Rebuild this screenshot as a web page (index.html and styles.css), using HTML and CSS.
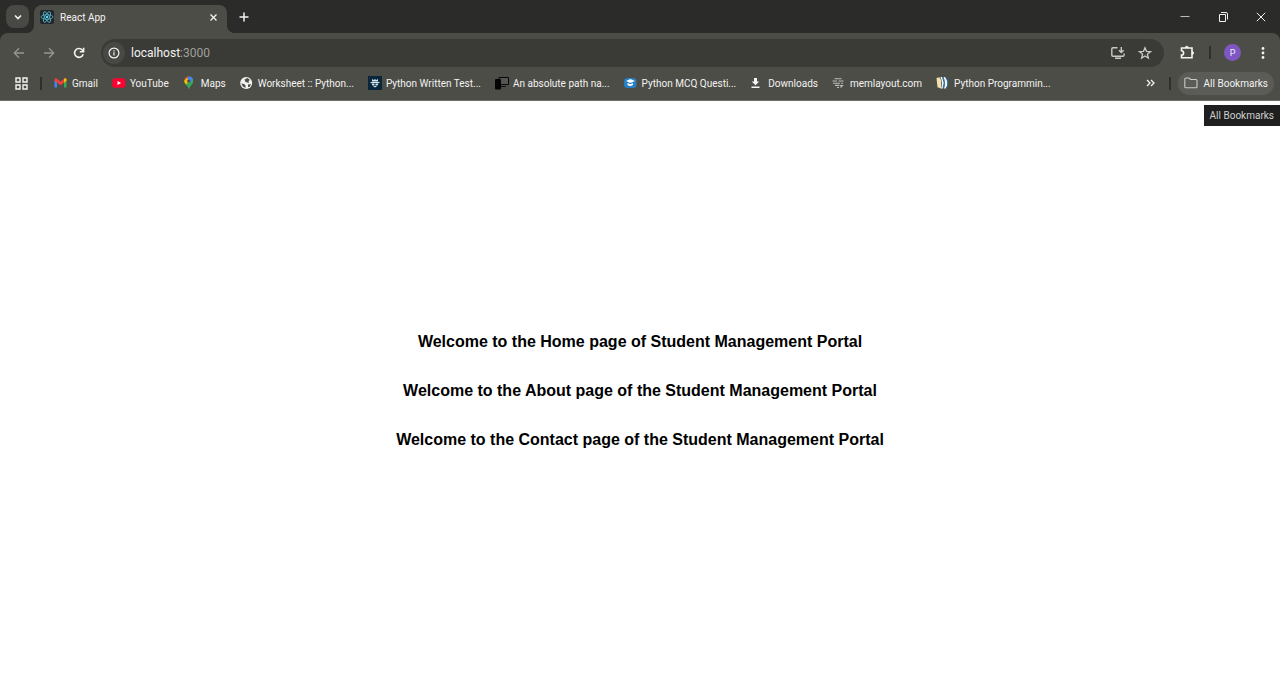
FILE: index.html
```html
<!DOCTYPE html>
<html lang="en">
<head>
<meta charset="utf-8">
<meta name="viewport" content="width=device-width, initial-scale=1">
<title>React App</title>
<link rel="stylesheet" href="styles.css">
</head>
<body>
<div class="browser">
  <header class="chrome">
    <div class="tab-strip">
      <button class="tab-search" aria-label="Search tabs"><svg width="10" height="10" viewBox="0 0 10 10" fill="none" stroke="currentColor" stroke-width="1.6"><path d="M2 3.5 5 6.5 8 3.5"/></svg></button>
      <div class="tab">
        <svg width="14" height="14" viewBox="0 0 14 14"><rect width="14" height="14" rx="2" fill="#20262b"/><g fill="none" stroke="#55b7cd" stroke-width=".8"><ellipse cx="7" cy="7" rx="6" ry="2.3"/><ellipse cx="7" cy="7" rx="6" ry="2.3" transform="rotate(60 7 7)"/><ellipse cx="7" cy="7" rx="6" ry="2.3" transform="rotate(120 7 7)"/></g><circle cx="7" cy="7" r="1.2" fill="#61dafb"/></svg>
        <span class="tab-title">React App</span>
        <button class="plain tab-close" aria-label="Close tab"><svg width="9" height="9" viewBox="0 0 9 9" stroke="currentColor" stroke-width="1.3"><path d="m1.5 1.5 6 6m0-6-6 6"/></svg></button>
      </div>
      <button class="plain new-tab" aria-label="New tab"><svg width="10" height="10" viewBox="0 0 10 10" stroke="currentColor" stroke-width="1.5"><path d="M5 .5v9M.5 5h9"/></svg></button>
      <div class="window-controls">
        <button class="plain" aria-label="Minimize"><svg width="10" height="10" viewBox="0 0 10 10" stroke="#bbb"><path d="M.5 4.500h9"/></svg></button>
        <button class="plain" aria-label="Restore"><svg width="10" height="10" viewBox="0 0 10 10" fill="none" stroke="currentColor"><path d="M1.500 2.500h6v7h-6zM3 .5h5q1.500 0 1.500 1.500v5.500"/></svg></button>
        <button class="plain" aria-label="Close"><svg width="10" height="10" viewBox="0 0 10 10" stroke="currentColor"><path d="m.8.8 8.400 8.400m0-8.400L.8 9.200"/></svg></button>
      </div>
    </div>
    <div class="panel">
      <div class="toolbar">
        <div class="nav">
          <button class="plain dim" aria-label="Back"><svg width="12" height="12" viewBox="0 0 12 12" fill="none" stroke="currentColor" stroke-width="1.300"><path d="M11 6H1.500M6 1.300 1.300 6 6 10.700"/></svg></button>
          <button class="plain dim" aria-label="Forward"><svg width="12" height="12" viewBox="0 0 12 12" fill="none" stroke="currentColor" stroke-width="1.300"><path d="M1 6h9.500M6 1.300 10.700 6 6 10.700"/></svg></button>
          <button class="plain" aria-label="Reload"><svg width="12" height="12" viewBox="0 0 12 12" fill="none" stroke="currentColor" stroke-width="1.600"><path d="M10.200 7.200A4.400 4.400 0 1 1 9.300 3l1 1"/><path d="M10.600.8v4H6.800"/></svg></button>
        </div>
        <div class="omnibox">
          <button class="plain site-info" aria-label="View site information"><svg width="12" height="12" viewBox="0 0 12 12" fill="none" stroke="currentColor" stroke-width="1.200"><circle cx="6" cy="6" r="4.900"/><path d="M6 5.300v3.200M6 3.200v1.200"/></svg></button>
          <span class="url">localhost<span class="port">:3000</span></span>
          <button class="plain soft" aria-label="Install app"><svg width="14" height="14" viewBox="0 0 14 14" fill="none" stroke="currentColor" stroke-width="1.400"><path d="M6.500 1.700H2Q.8 1.700.8 3v6Q.8 10.300 2 10.300h9.800q1.300 0 1.300-1.300V7.500M4 12.300h6M10.300 1v5.500M8 4.300l2.300 2.300 2.400-2.300"/></svg></button>
          <button class="plain soft" aria-label="Bookmark this tab"><svg width="14" height="14" viewBox="0 0 14 14" fill="none" stroke="currentColor" stroke-width="1.300"><path d="m7 1.700 1.500 3.600 4 .3-3.100 2.600 1 3.900L7 10l-3.400 2.100 1-3.900-3.100-2.600 4-.3z"/></svg></button>
        </div>
        <button class="plain extensions" aria-label="Extensions"><svg width="15" height="15" viewBox="0 0 15 15" fill="none" stroke="currentColor" stroke-width="1.600"><path d="M1.500 3H12v9.800H1.500V10a2.100 2.100 0 0 0 0-4.200z"/><path d="M5.200 2.500a1.600 1.600 0 0 1 3.100 0zM12.300 6.400a1.600 1.600 0 0 1 0 3.100z" fill="currentColor" stroke-width="1"/></svg></button>
        <span class="divider"></span>
        <button class="avatar" aria-label="Profile">P</button>
        <button class="plain menu" aria-label="Menu"><svg width="4" height="14" viewBox="0 0 4 14" fill="currentColor"><circle cx="2" cy="2.500" r="1.400"/><circle cx="2" cy="7" r="1.400"/><circle cx="2" cy="11.500" r="1.400"/></svg></button>
      </div>
      <nav class="bookmarks" aria-label="Bookmarks">
        <button class="plain apps" aria-label="Apps"><svg width="13" height="13" viewBox="0 0 13 13" fill="none" stroke="currentColor" stroke-width="1.400"><path d="M1 1h4v4H1zM8 1h4v4H8zM1 8h4v4H1zM8 8h4v4H8z"/></svg></button>
        <span class="divider"></span>
        <div class="links">
          <a href="#"><svg width="14" height="14" viewBox="0 0 14 14"><path d="M.5 4v7.500H3V6z" fill="#4285f4"/><path d="M10 6v5.500h2.500V4z" fill="#34a853"/><path d="M.5 3.500Q.8 1.800 2.500 2.600l4 3 4-3Q12.300 1.800 12.500 3.500v1.300L6.500 9.300.5 4.800z" fill="#ea4335"/><path d="m10 3 .5-.4q1.800-.8 2 .9v1.300L10 6.700z" fill="#fbbc04"/></svg>Gmail</a>
          <a href="#"><svg width="14" height="14" viewBox="0 0 14 14"><rect x=".3" y="2.300" width="13" height="9.400" rx="2.500" fill="#f03"/><path d="m5.500 5 3.600 2-3.600 2z" fill="#fff"/></svg>YouTube</a>
          <a href="#"><svg width="14" height="14" viewBox="0 0 14 14"><path d="M1.200 5a4.500 4.500 0 0 1 9 0c0 3.500-3 4-4.200 8.500C5.100 9.500 1.200 8.500 1.200 5" fill="#34a853"/><path d="M1.300 5.800 6.400.6a4.500 4.500 0 0 0-5.100 5.200" fill="#ea4335"/><path d="M1.300 4.800Q1.400 6.800 3 8.600L7 4 4 1.800z" fill="#fbbc04"/><path d="M4.400 2 5.900.5q3 0 4.200 3L6.900 7z" fill="#4285f4"/><circle cx="5.700" cy="5" r="1.600" fill="#4d4d48"/></svg>Maps</a>
          <a href="#"><svg width="14" height="14" viewBox="0 0 14 14"><circle cx="6.200" cy="7" r="6" fill="#f1f1f1"/><path d="M1.500 7.500 4 8l1.500 1.300v2.500Q2.200 11 1.500 7.500M4.500 3.500 7.500 2 10 4l-1.500 1L9 7 5.500 6zM8 8.500l3-.5-1.500 3L8 11z" fill="#4d4d48"/></svg>Worksheet :: Python...</a>
          <a href="#"><svg width="14" height="14" viewBox="0 0 14 14"><path d="M0 0h14v14H0z" fill="#09263b"/><path d="m4 3 1.500 1L7 3.300 8.500 4 10 3v2.500H4zM2.500 6h9v1h-9zM3.500 7.500h3v2h-2zM7.500 7.500h3l-1 2h-2zM5 10h4l-2 1.500z" fill="#d3e7ee"/></svg>Python Written Test...</a>
          <a href="#"><svg width="14" height="14" viewBox="0 0 14 14"><path d="M4 1.500h9.500v7H4z" fill="#555" stroke="#090909"/><path d="M6 10.500h5" stroke="#111"/><rect y="3" width="6" height="10.500" rx="1" fill="#030303"/></svg>An absolute path na...</a>
          <a href="#"><svg width="14" height="14" viewBox="0 0 14 14"><rect y="2" width="12.500" height="10" rx="3.500" fill="#2580c5"/><path d="m2 5 4.300-2L11 5 6.300 7zM3.500 7l2.800 1.200L9 7v2q-2.700 2-5.500 0z" fill="#fff"/></svg>Python MCQ Questi...</a>
          <a href="#"><svg width="14" height="14" viewBox="0 0 14 14" fill="#f5f5f5"><path d="M4 2h3v3.500h2.300L5.500 9.300 1.700 5.500H4zM1.500 10.500h8V12h-8z"/></svg>Downloads</a>
          <a href="#"><svg width="14" height="14" viewBox="0 0 14 14" fill="none" stroke="#bbb" stroke-width="1.100"><path d="M2.500 2.700h7M.5 5h4.500M6.500 5h5M1 7.200h7M9 7.200h2M3 9.400h4M7.500 9.500h3l-2 2M5 11.500h2"/></svg>memlayout.com</a>
          <a href="#"><svg width="14" height="14" viewBox="0 0 14 14"><path d="m.5 2 3-.7L5 4v8.500l-3.500-1.300z" fill="#f1dfad"/><path d="M4.500 1h2q3 6 .5 11.500H5Q7 7 4.500 1" fill="#f8f8f8"/><path d="M7.500 1h2q4 6 .5 11.500H8Q10 7 7.500 1" fill="#e8f5fb"/><path d="M6.500 1q3 6 .5 11.500M9.500 1q4.500 6 .5 11.500" fill="none" stroke="#286da0"/></svg>Python Programmin...</a>
        </div>
        <button class="plain overflow" aria-label="More bookmarks"><svg width="9" height="8" viewBox="0 0 9 8" fill="none" stroke="currentColor" stroke-width="1.300"><path d="m1 1 3 3-3 3M5 1l3 3-3 3"/></svg></button>
        <span class="divider"></span>
        <div class="all-wrap">
          <button class="all"><svg width="14" height="12" viewBox="0 0 14 12" fill="none" stroke="#c9c9c5" stroke-width="1.100"><path d="M.8 9.800V2Q.8 1 2 1h3l1.500 1.500H12q1 0 1 1v6.300q0 1-1 1H1.800q-1 0-1-1"/></svg>All Bookmarks</button>
          <span class="tooltip" role="tooltip">All Bookmarks</span>
        </div>
      </nav>
    </div>
  </header>
  <main class="page">
    <h3>Welcome to the Home page of Student Management Portal</h3>
    <h3>Welcome to the About page of the Student Management Portal</h3>
    <h3>Welcome to the Contact page of the Student Management Portal</h3>
  </main>
</div>
</body>
</html>
```
FILE: styles.css
```css
* { box-sizing: border-box; }
body { margin: 0; background: #fff; font-family: Roboto, "Open Sans", sans-serif; font-size: 10px; color: #f3f3f1; }
svg { display: block; flex: none; }
button { font: inherit; color: inherit; border: 0; padding: 0; }
.plain { background: none; display: flex; align-items: center; justify-content: center; }
.browser { min-height: 100vh; display: flex; flex-direction: column; }
.chrome { background: #2b2b29; }
.tab-strip { display: flex; height: 33px; padding-left: 6px; }
.tab-search { width: 23px; height: 23px; margin-top: 5px; border-radius: 8px; background: #484844; display: flex; align-items: center; justify-content: center; }
.tab { position: relative; display: flex; align-items: center; gap: 6px; width: 193px; margin: 5px 0 0 5px; padding: 0 8px 4px 6px; background: #4d4d48; border-radius: 8px 8px 0 0; }
.tab::before, .tab::after { content: ""; position: absolute; bottom: 0; width: 8px; height: 8px; }
.tab::before { right: 100%; background: radial-gradient(circle at 0 0, transparent 8px, #4d4d48 8px); }
.tab::after { left: 100%; background: radial-gradient(circle at 100% 0, transparent 8px, #4d4d48 8px); }
.tab-title { flex: 1; }
.tab-close { width: 12px; height: 14px; }
.new-tab { width: 34px; }
.window-controls { display: flex; margin-left: auto; }
.window-controls button { width: 38px; }
.panel { background: #4d4d48; border-radius: 8px 8px 0 0; border-bottom: 1px solid #6c6c68; }
.toolbar { display: flex; align-items: center; height: 39px; padding: 0 15px 0 8px; }
.nav { display: flex; gap: 18px; padding: 0 16px 0 5px; }
.dim { color: #969691; }
.omnibox { flex: 1; display: flex; align-items: center; gap: 13px; height: 28px; padding: 0 12px 0 2px; border-radius: 14px; background: #3a3a37; }
.site-info { width: 22px; height: 22px; border-radius: 50%; background: #484845; }
.url { flex: 1; margin-left: -7px; font-size: 12px; }
.port { color: #a0a09c; }
.soft { color: #c9c9c5; }
.extensions { margin: 0 14px 0 16px; }
.divider { flex: none; width: 2px; height: 13px; background: #2f2f2c; }
.avatar { width: 17px; height: 17px; margin: 0 20px 0 13px; border-radius: 50%; background: #7e57c2; font-size: 9px; }
.bookmarks { display: flex; align-items: center; height: 28px; padding: 0 6px 6px 15px; white-space: nowrap; }
.apps { margin-right: 12px; }
.links { flex: 1; min-width: 0; display: flex; gap: 14px; margin-left: 12px; overflow: hidden; }
.links a { display: flex; align-items: center; gap: 4px; color: inherit; text-decoration: none; }
.overflow { margin: 0 14px; }
.all-wrap { position: relative; margin-left: 7px; }
.all { display: flex; align-items: center; gap: 6px; height: 23px; padding: 0 6px; border-radius: 12px; background: #5b5b57; }
.tooltip { position: absolute; top: 33px; right: -6px; padding: 0 6px; line-height: 21px; background: #1f1f1f; color: #d0d0d0; }
.page { flex: 1; display: flex; flex-direction: column; align-items: center; justify-content: center; gap: 32px; padding-top: 2px; color: #000; font-family: "Liberation Sans", Arial, sans-serif; }
.page h3 { margin: 0; font-size: 16px; line-height: 17px; }
```
